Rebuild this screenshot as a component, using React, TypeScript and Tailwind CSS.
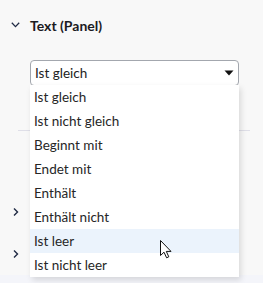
import React from "react";

const items = [
  "Ist gleich",
  "Ist nicht gleich",
  "Beginnt mit",
  "Endet mit",
  "Enthält",
  "Enthält nicht",
  "Ist leer",
  "Ist nicht leer",
];

function ChevronRight() {
  return (
    <svg width="8" height="10" viewBox="0 0 8 10" fill="none">
      <path d="M2 1.5 L5.5 5 L2 8.5" stroke="#1f2a44" strokeWidth="1.4" />
    </svg>
  );
}

export default function App() {
  return (
    <div
      className="relative w-[263px] h-[283px] bg-[#f8f8f8] overflow-hidden text-[#222]"
      style={{ fontFamily: 'Lato, "Noto Sans", sans-serif' }}
    >
      <div className="flex items-center h-[50px] pl-[11px] gap-[10px]">
        <svg width="9" height="6" viewBox="0 0 9 6" fill="none">
          <path d="M0.8 0.8 L4.5 4.6 L8.2 0.8" stroke="#1f2a44" strokeWidth="1.3" />
        </svg>
        <span className="text-[14px] font-bold text-[#1b1b1f]">Text (Panel)</span>
      </div>
      <div className="pl-[30px] mt-[10px]">
        <div className="w-[209px] h-[26px] border border-[#a3a7ae] rounded-[4px] bg-white flex items-center justify-between pl-[4px] pr-[4px]">
          <span className="text-[13.5px]">Ist gleich</span>
          <svg width="10" height="6" viewBox="0 0 10 6">
            <path d="M0.5 0.5 H9.5 L5 5.5 Z" fill="#111" />
          </svg>
        </div>
      </div>
      <div className="ml-[18px] mr-[13px] mt-[44px] h-px bg-[#dfdfe8]" />
      <div className="mt-[60px]">
        <div className="h-[42px] flex items-center pl-[12px]">
          <ChevronRight />
        </div>
        <div className="h-[42px] flex items-center pl-[12px]">
          <ChevronRight />
        </div>
        <div className="h-[10px] bg-[#f4f5fa]" />
      </div>

      <div className="absolute left-[30px] top-[85px] w-[209px] bg-white shadow-[2px_3px_6px_rgba(0,0,0,0.13)]">
        {items.map((it) => (
          <div
            key={it}
            className={`h-[24px] flex items-center pl-[4px] text-[13.5px] text-[#262626] ${
              it === "Ist leer" ? "bg-[#ebf3fc]" : ""
            }`}
          >
            {it}
          </div>
        ))}
      </div>

      <svg
        className="absolute left-[160px] top-[240px]"
        width="13"
        height="19"
        viewBox="0 0 13 19"
      >
        <path
          d="M0.5 0.5 L0.5 15.5 L4 12.2 L6.6 17.8 L8.8 16.8 L6.3 11.4 L11 11.4 Z"
          fill="#fff"
          stroke="#111"
          strokeWidth="1"
          strokeLinejoin="round"
        />
      </svg>
    </div>
  );
}
